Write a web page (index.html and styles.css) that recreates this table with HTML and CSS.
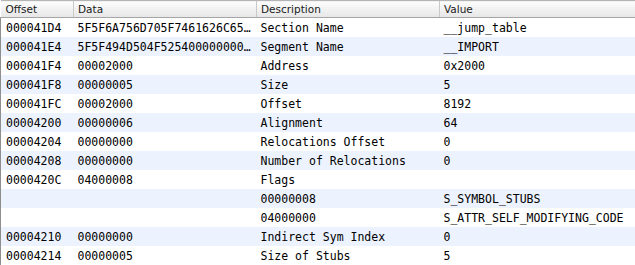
FILE: index.html
```html
<!DOCTYPE html>
<html>

<head>
    <meta charset="utf-8" />
    <title>Section Header</title>
    <link rel="stylesheet" href="styles.css">
</head>

<body>
    <table class="grid">
        <colgroup>
            <col class="col-offset">
            <col class="col-data">
            <col class="col-desc">
            <col class="col-value">
        </colgroup>
        <thead>
            <tr>
                <th>Offset</th>
                <th>Data</th>
                <th>Description</th>
                <th>Value</th>
            </tr>
        </thead>
        <tbody>
            <tr>
                <td>000041D4</td>
                <td title="5F5F6A756D705F7461626C6500000000">5F5F6A756D705F7461626C65…</td>
                <td>Section Name</td>
                <td>__jump_table</td>
            </tr>
            <tr>
                <td>000041E4</td>
                <td title="5F5F494D504F52540000000000000000">5F5F494D504F525400000000…</td>
                <td>Segment Name</td>
                <td>__IMPORT</td>
            </tr>
            <tr>
                <td>000041F4</td>
                <td>00002000</td>
                <td>Address</td>
                <td>0x2000</td>
            </tr>
            <tr>
                <td>000041F8</td>
                <td>00000005</td>
                <td>Size</td>
                <td>5</td>
            </tr>
            <tr>
                <td>000041FC</td>
                <td>00002000</td>
                <td>Offset</td>
                <td>8192</td>
            </tr>
            <tr>
                <td>00004200</td>
                <td>00000006</td>
                <td>Alignment</td>
                <td>64</td>
            </tr>
            <tr>
                <td>00004204</td>
                <td>00000000</td>
                <td>Relocations Offset</td>
                <td>0</td>
            </tr>
            <tr>
                <td>00004208</td>
                <td>00000000</td>
                <td>Number of Relocations</td>
                <td>0</td>
            </tr>
            <tr>
                <td>0000420C</td>
                <td>04000008</td>
                <td>Flags</td>
                <td></td>
            </tr>
            <tr>
                <td></td>
                <td></td>
                <td>00000008</td>
                <td>S_SYMBOL_STUBS</td>
            </tr>
            <tr>
                <td></td>
                <td></td>
                <td>04000000</td>
                <td>S_ATTR_SELF_MODIFYING_CODE</td>
            </tr>
            <tr>
                <td>00004210</td>
                <td>00000000</td>
                <td>Indirect Sym Index</td>
                <td>0</td>
            </tr>
            <tr>
                <td>00004214</td>
                <td>00000005</td>
                <td>Size of Stubs</td>
                <td>5</td>
            </tr>
        </tbody>
    </table>
</body>

</html>
```

FILE: styles.css
```css
body {
    margin: 0;
    background-color: white;
}

.grid {
    width: 635px;
    table-layout: fixed;
    border-collapse: collapse;
    border-spacing: 0;
}

.col-offset {
    width: 73px;
}

.col-data {
    width: 183px;
}

.col-desc {
    width: 183px;
}

.col-value {
    width: 196px;
}

.grid th {
    height: 16px;
    padding: 0 0 0 4px;
    text-align: left;
    font-family: "DejaVu Sans", sans-serif;
    font-size: 10.5px;
    font-weight: normal;
    color: #1a1a1a;
    background: linear-gradient(#fdfdfd, #e6e6e6);
    border-top: 1px solid #b5b5b5;
    border-bottom: 1px solid #a5a5a5;
    border-left: 1px solid #c9c9c9;
    line-height: 15px;
}

.grid th:first-child {
    border-left: none;
    padding-left: 5px;
}

.grid td {
    height: 19px;
    padding: 1px 0 0 4px;
    box-sizing: border-box;
    font-family: "DejaVu Sans Mono", monospace;
    font-size: 11.5px;
    color: #000;
    white-space: nowrap;
    overflow: hidden;
    line-height: 18px;
}

.grid td:first-child {
    padding-left: 5px;
    border-left: 1px solid #8e8e8e;
}

.grid tbody tr:nth-child(even) {
    background-color: #edf3fe;
}
```
